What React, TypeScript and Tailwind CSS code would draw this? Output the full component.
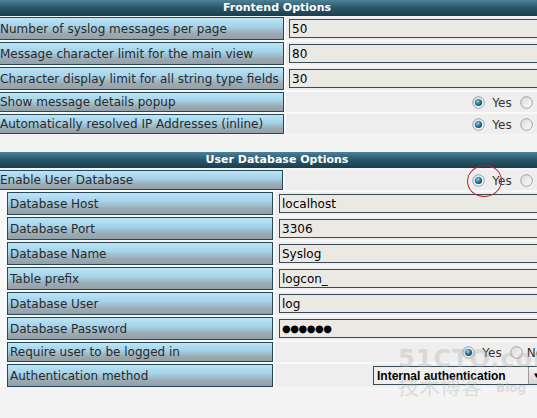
import React from 'react'

const font = "font-['DejaVu_Sans',Verdana,sans-serif]"

const Header = ({ title }: { title: string }) => (
  <div className="h-[16px] w-full bg-[linear-gradient(#4d8196,#2a5a6e_45%,#1a3c4c)] text-center text-[11px] leading-[16px] font-bold text-white">
    {title}
  </div>
)

const Label = ({ text, className = '' }: { text: string; className?: string }) => (
  <div
    className={`flex items-center border border-[#23495b] bg-[linear-gradient(#bce4f6,#a5d3e9_40%,#9aaab3_75%,#93a0a8)] pl-[2px] text-[12px] text-[#2a2a2a] whitespace-nowrap ${className}`}
  >
    {text}
  </div>
)

const Radio = ({ checked, className = '' }: { checked?: boolean; className?: string }) => (
  <svg width="13" height="13" viewBox="0 0 13 13" className={`shrink-0 ${className}`}>
    <defs>
      <linearGradient id="rg" x1="0" y1="0" x2="1" y2="1">
        <stop offset="0" stopColor="#d6d6d6" />
        <stop offset="1" stopColor="#ffffff" />
      </linearGradient>
      <radialGradient id="dot" cx="0.4" cy="0.35" r="0.7">
        <stop offset="0" stopColor="#8fd0ee" />
        <stop offset="0.5" stopColor="#2f7ea6" />
        <stop offset="1" stopColor="#123f57" />
      </radialGradient>
    </defs>
    <circle cx="6.5" cy="6.5" r="5.8" fill="url(#rg)" stroke="#9aa3aa" strokeWidth="1" />
    {checked && <circle cx="6.5" cy="6.5" r="3.6" fill="url(#dot)" />}
  </svg>
)

const YesNo = ({ pr }: { pr: string }) => (
  <div className={`flex h-full items-center justify-end pt-[1px] text-[12px] text-[#333] ${pr}`}>
    <Radio checked />
    <span className="ml-[7px]">Yes</span>
    <Radio className="ml-[8px]" />
    <span className="ml-[4px]">No</span>
  </div>
)

const TextInput = ({ value, dots }: { value: string; dots?: boolean }) => (
  <div
    className={`flex h-[19px] items-center border border-[#3a4a55] bg-[#ebe9e4] pl-[2px] text-black ${dots ? 'text-[10px] tracking-[-0.5px]' : 'text-[12px]'}`}
  >
    {value}
  </div>
)

export default function App() {
  const frontend = [
    ['Number of syslog messages per page', '50'],
    ['Message character limit for the main view', '80'],
    ['Character display limit for all string type fields', '30']
  ]
  const db = [
    ['Database Host', 'localhost'],
    ['Database Port', '3306'],
    ['Database Name', 'Syslog'],
    ['Table prefix', 'logcon_'],
    ['Database User', 'log']
  ]

  return (
    <div className={`relative h-[418px] w-[537px] overflow-hidden bg-[#f4f4f4] ${font}`}>
      <div className="ml-[-3px] flex w-[560px] flex-col">
        <Header title="Frontend Options" />
        <div className="mt-[1px] flex flex-col gap-[2px] bg-[#f8f8f8]">
          {frontend.map(([label, value]) => (
            <div key={label} className="flex h-[23px] gap-[2px]">
              <Label text={label} className="w-[287px]" />
              <div className="flex grow items-center bg-[#eeeeee] pl-[3px] pr-[6px]">
                <div className="w-full">
                  <TextInput value={value} />
                </div>
              </div>
            </div>
          ))}
          {['Show message details popup', 'Automatically resolved IP Addresses (inline)'].map((label) => (
            <div key={label} className="flex h-[20px] gap-[2px]">
              <Label text={label} className="w-[287px]" />
              <div className="grow bg-[#eeeeee]">
                <YesNo pr="pr-[4px]" />
              </div>
            </div>
          ))}
        </div>

        <div className="h-[18px]" />
        <Header title="User Database Options" />
        <div className="mt-[2px] flex flex-col gap-[2px] bg-[#f8f8f8]">
          <div className="flex h-[20px] gap-[2px]">
            <Label text="Enable User Database" className="w-[286px]" />
            <div className="relative grow bg-[#eeeeee]">
              <YesNo pr="pr-[4px]" />
              <div className="absolute left-[182px] top-[-5px] h-[32px] w-[35px] rotate-[-8deg] rounded-[50%] border border-[#b8202a]" />
            </div>
          </div>
          <div className="flex flex-col gap-[2px] pl-[10px] pr-[5px]">
            {db.map(([label, value]) => (
              <div key={label} className="flex h-[23px] gap-[2px]">
                <Label text={label} className="w-[266px]" />
                <div className="flex grow items-center bg-[#eeeeee] pl-[4px] pr-[4px]">
                  <div className="w-full">
                    <TextInput value={value} />
                  </div>
                </div>
              </div>
            ))}
            <div className="flex h-[23px] gap-[2px]">
              <Label text="Database Password" className="w-[266px]" />
              <div className="flex grow items-center bg-[#eeeeee] pl-[4px] pr-[4px]">
                <div className="w-full">
                  <TextInput value={'\u25cf\u25cf\u25cf\u25cf\u25cf\u25cf'} dots />
                </div>
              </div>
            </div>
            <div className="flex h-[20px] gap-[2px]">
              <Label text="Require user to be logged in" className="w-[266px]" />
              <div className="grow bg-[#eeeeee]">
                <YesNo pr="pr-[9px]" />
              </div>
            </div>
            <div className="flex h-[23px] gap-[2px]">
              <Label text="Authentication method" className="w-[266px]" />
              <div className="flex grow items-center justify-end bg-[#eeeeee] pr-[7px]">
                <div className="flex h-[19px] w-[172px] items-center border border-[#3a4a55] bg-[#f0f0f0] font-['Liberation_Sans',Arial,sans-serif] text-[12px] font-bold text-black">
                  <span className="grow pl-[3px] whitespace-nowrap">Internal authentication</span>
                  <span className="flex h-full w-[16px] shrink-0 items-center justify-center border-l border-[#9a9a9a] bg-[linear-gradient(#f4f4f4,#d4d4d4)] text-[8px]">
                    ▼
                  </span>
                </div>
              </div>
            </div>
          </div>
        </div>
      </div>

      <div className="pointer-events-none absolute left-[398px] top-[346px] flex flex-col text-[#b0b0b0] opacity-35">
        <span className="font-['DejaVu_Sans',sans-serif] text-[24px] font-bold leading-[26px] tracking-[1px]">51CTO.com</span>
        <div className="flex items-end gap-[14px]">
          <span className="font-['Noto_Sans_CJK_SC',sans-serif] text-[21px] leading-[26px]">技术博客</span>
          <span className="font-['DejaVu_Sans',sans-serif] text-[12px] font-bold leading-[20px]">Blog</span>
        </div>
      </div>
    </div>
  )
}
